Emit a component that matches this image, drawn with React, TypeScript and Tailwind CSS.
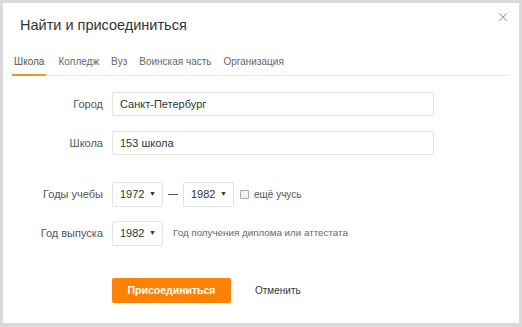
import { X } from "lucide-react";

const font = { fontFamily: '"Liberation Sans", Arial, sans-serif' };

function Select({ value }: { value: string }) {
  return (
    <div className="flex h-[25px] w-[51px] items-center justify-between rounded-[2px] border border-[#e3e3e3] pl-[7px] pr-[6px] text-[11px] text-[#333]">
      <span>{value}</span>
      <span className="text-[7px] text-[#333]">▼</span>
    </div>
  );
}

export default function App() {
  const tabs = ["Школа", "Колледж", "Вуз", "Воинская часть", "Организация"];

  return (
    <div
      className="h-[327px] w-[522px] bg-[#d9d9d9] pb-[4px] pl-[3px] pr-[3px] pt-[3px]"
      style={font}
    >
      <div className="relative h-full bg-white">
        <X
          className="absolute right-[9px] top-[7px] text-[#999]"
          size={14}
          strokeWidth={1.75}
        />

        <h1 className="pl-[17px] pt-[12px] text-[14.5px] leading-[20px] text-[#333]">
          Найти и присоединиться
        </h1>

        <div className="mx-[9px] mt-[19px] flex gap-[12px] border-b border-[#e8e8e8]">
          {tabs.map((t, i) => (
            <div
              key={t}
              className={
                i === 0
                  ? "-mb-px border-b-2 border-[#f0922e] px-[2px] pb-[5px] text-[10px] leading-[15px] text-[#555]"
                  : "-mb-px border-b-2 border-transparent pb-[5px] text-[10px] leading-[15px] text-[#666]"
              }
            >
              {t}
            </div>
          ))}
        </div>

        <div className="mt-[16px] flex flex-col">
          <div className="flex items-center">
            <div className="w-[100px] text-right text-[11px] text-[#555]">Город</div>
            <div className="ml-[9px] flex h-[24px] w-[322px] items-center rounded-[2px] border border-[#e3e3e3] pl-[7px] text-[11px] text-[#333]">
              Санкт-Петербург
            </div>
          </div>

          <div className="mt-[15px] flex items-center">
            <div className="w-[100px] text-right text-[11px] text-[#555]">Школа</div>
            <div className="ml-[9px] flex h-[24px] w-[322px] items-center rounded-[2px] border border-[#e3e3e3] pl-[7px] text-[11px] text-[#333]">
              153 школа
            </div>
          </div>

          <div className="mt-[27px] flex items-center">
            <div className="w-[100px] text-right text-[11px] text-[#555]">Годы учебы</div>
            <div className="ml-[9px] flex items-center">
              <Select value="1972" />
              <div className="mx-[5px] h-px w-[10px] bg-[#555]" />
              <Select value="1982" />
              <div className="ml-[6px] h-[9px] w-[9px] rounded-[1px] border border-[#aaa] bg-[#f2f2f2]" />
              <span className="ml-[5px] text-[10px] text-[#555]">ещё учусь</span>
            </div>
          </div>

          <div className="mt-[14px] flex items-center">
            <div className="w-[100px] text-right text-[11px] text-[#555]">Год выпуска</div>
            <div className="ml-[9px] flex items-center">
              <Select value="1982" />
              <span className="ml-[10px] text-[9.8px] text-[#666]">
                Год получения диплома или аттестата
              </span>
            </div>
          </div>

          <div className="ml-[109px] mt-[32px] flex items-center">
            <button className="flex h-[25px] w-[119px] items-center justify-center rounded-[2px] bg-[#fd8105] text-[10.5px] font-bold text-white">
              Присоединиться
            </button>
            <span className="ml-[24px] text-[10px] text-[#333]">Отменить</span>
          </div>
        </div>
      </div>
    </div>
  );
}
